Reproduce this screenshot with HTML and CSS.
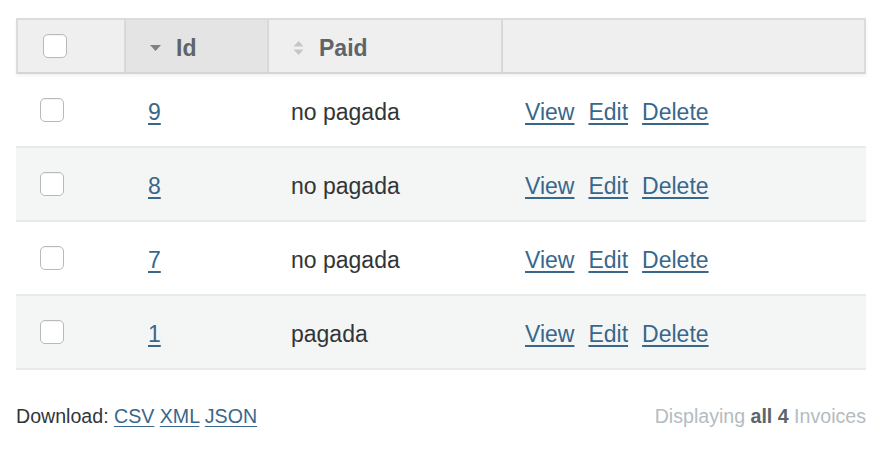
FILE: index.html
```html
<!DOCTYPE html>
<html>
<head>
<meta charset="utf-8">
<link rel="stylesheet" href="styles.css">
</head>
<body>
<div class="page">
  <table class="index-table">
    <thead>
      <tr>
        <th class="col-select"><span class="cb"></span></th>
        <th class="col-id sorted"><span class="sort-icon desc"><svg width="11" height="6" viewBox="0 0 11 6"><path d="M0 0h11L5.5 6z" fill="#7d8185"/></svg></span>Id</th>
        <th class="col-paid"><span class="sort-icon both"><svg width="11" height="16" viewBox="0 0 11 16"><path d="M0.5 6.5L5.5 1l5 5.5z" fill="#c4c7c9"/><path d="M0.5 9.5h10L5.5 15z" fill="#c4c7c9"/></svg></span>Paid</th>
        <th class="col-actions"></th>
      </tr>
    </thead>
    <tbody>
      <tr class="odd"><td class="col-select"><span class="cb"></span></td><td class="col-id"><a href="#">9</a></td><td>no pagada</td><td class="actions"><a href="#">View</a><a href="#">Edit</a><a href="#">Delete</a></td></tr>
      <tr class="even"><td class="col-select"><span class="cb"></span></td><td class="col-id"><a href="#">8</a></td><td>no pagada</td><td class="actions"><a href="#">View</a><a href="#">Edit</a><a href="#">Delete</a></td></tr>
      <tr class="odd"><td class="col-select"><span class="cb"></span></td><td class="col-id"><a href="#">7</a></td><td>no pagada</td><td class="actions"><a href="#">View</a><a href="#">Edit</a><a href="#">Delete</a></td></tr>
      <tr class="even"><td class="col-select"><span class="cb"></span></td><td class="col-id"><a href="#">1</a></td><td>pagada</td><td class="actions"><a href="#">View</a><a href="#">Edit</a><a href="#">Delete</a></td></tr>
    </tbody>
  </table>
  <div class="footer">
    <div class="download">Download: <a href="#">CSV</a> <a href="#">XML</a> <a href="#">JSON</a></div>
    <div class="info">Displaying <b>all 4</b> Invoices</div>
  </div>
</div>
</body>
</html>
```

FILE: styles.css
```css
html, body { margin: 0; padding: 0; background: #fff; }
body { font-family: "Liberation Sans", Arial, Helvetica, sans-serif; color: #323537; }
.page { padding: 18px 26px 0 16px; }
.index-table {
  width: 850px;
  border-collapse: separate;
  border-spacing: 0;
  font-size: 23px;
}
.index-table thead th {
  height: 56px;
  padding: 5px 24px 0;
  box-sizing: border-box;
  background: #efefef;
  border-top: 2px solid #dcdcdc;
  border-bottom: 2px solid #d5d5d5;
  border-right: 2px solid #dcdcdc;
  text-align: left;
  font-weight: bold;
  color: #5e6469;
  box-shadow: 0 2px 3px rgba(0,0,0,0.06);
  vertical-align: middle;
}
.index-table thead th:first-child { border-left: 2px solid #dcdcdc; }
.index-table thead th.sorted { background: #e4e4e4; }
.col-select { width: 110px; }
.col-id { width: 143px; }
.col-paid { width: 234px; }
.index-table thead th.col-select { padding-left: 25px; padding-top: 0; }
.sort-icon { display: inline-block; width: 16px; margin-right: 10px; vertical-align: middle; position: relative; top: -2px; }
.sort-icon svg { display: block; }
.index-table td {
  height: 74px;
  box-sizing: border-box;
  padding: 5px 22px 0;
  border-bottom: 2px solid #e8e9e9;
  vertical-align: middle;
}
.index-table td.col-select { padding-left: 24px; padding-top: 0; }
.index-table tr.even td { background: #f4f5f5; }
.cb {
  display: block;
  width: 22px;
  height: 22px;
  border: 1.5px solid #b9b9b9;
  border-radius: 5px;
  background: #fff;
  box-shadow: inset 0 1px 1px rgba(0,0,0,0.05);
}
a { color: #38678b; text-decoration: underline; text-underline-offset: 3px; }
.actions a { margin-right: 14px; }
.footer {
  width: 850px;
  display: flex;
  justify-content: space-between;
  align-items: center;
  margin-top: 35px;
  font-size: 19.6px;
}
.download { color: #323537; }
.info { color: #b3bcc1; }
.info b { color: #5e6469; }
```
